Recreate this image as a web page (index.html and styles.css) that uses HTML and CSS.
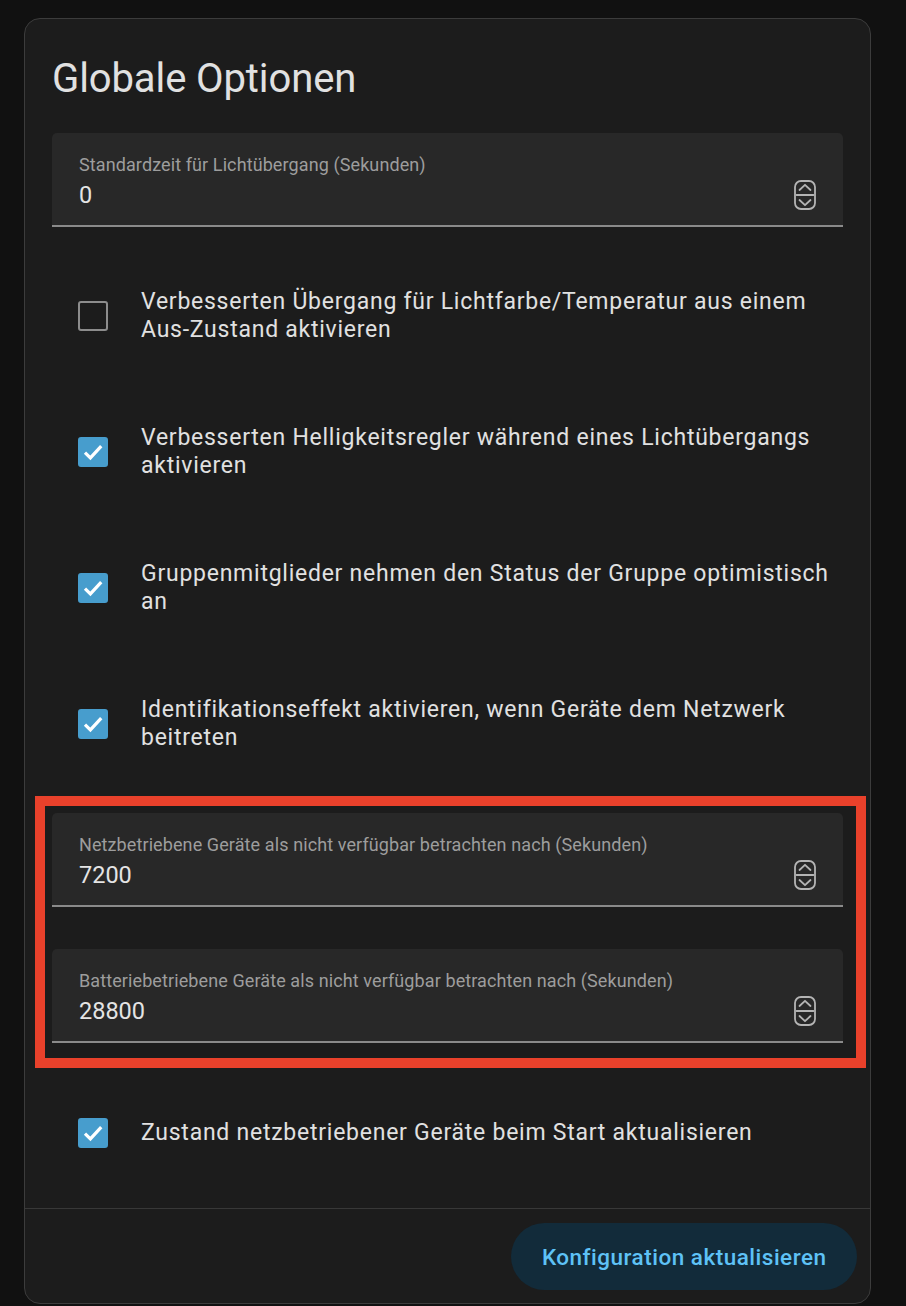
FILE: index.html
```html
<!DOCTYPE html>
<html lang="de">
<head>
<meta charset="utf-8">
<title>Globale Optionen</title>
<link rel="stylesheet" href="styles.css">
</head>
<body>
<div class="card">
  <h1 class="card-title">Globale Optionen</h1>
  <div class="card-content">
    <div class="field">
      <div class="field-label">Standardzeit für Lichtübergang (Sekunden)</div>
      <div class="field-row">
        <span class="field-value">0</span>
        <svg class="spinner" width="22" height="30" viewBox="0 0 22 30"><rect x="1" y="1" width="20" height="28" rx="6"/><path d="M5.5 10 L11 4.8 L16.5 10"/><path d="M2.5 15 H19.5"/><path d="M5.5 20 L11 25.2 L16.5 20"/></svg>
      </div>
    </div>

    <div class="row first">
      <span class="box"></span>
      <span class="row-text">Verbesserten Übergang für Lichtfarbe/Temperatur aus einem Aus-Zustand aktivieren</span>
    </div>
    <div class="row">
      <span class="box checked"><svg viewBox="0 0 24 24"><path d="M4.6 12.6 L9.6 17.4 L19.6 6.6"/></svg></span>
      <span class="row-text">Verbesserten Helligkeitsregler während eines Lichtübergangs aktivieren</span>
    </div>
    <div class="row">
      <span class="box checked"><svg viewBox="0 0 24 24"><path d="M4.6 12.6 L9.6 17.4 L19.6 6.6"/></svg></span>
      <span class="row-text">Gruppenmitglieder nehmen den Status der Gruppe optimistisch an</span>
    </div>
    <div class="row">
      <span class="box checked"><svg viewBox="0 0 24 24"><path d="M4.6 12.6 L9.6 17.4 L19.6 6.6"/></svg></span>
      <span class="row-text">Identifikationseffekt aktivieren, wenn Geräte dem Netzwerk beitreten</span>
    </div>

    <div class="highlight">
      <div class="field">
        <div class="field-label">Netzbetriebene Geräte als nicht verfügbar betrachten nach (Sekunden)</div>
        <div class="field-row">
          <span class="field-value">7200</span>
          <svg class="spinner" width="22" height="30" viewBox="0 0 22 30"><rect x="1" y="1" width="20" height="28" rx="6"/><path d="M5.5 10 L11 4.8 L16.5 10"/><path d="M2.5 15 H19.5"/><path d="M5.5 20 L11 25.2 L16.5 20"/></svg>
        </div>
      </div>
      <div class="field second">
        <div class="field-label">Batteriebetriebene Geräte als nicht verfügbar betrachten nach (Sekunden)</div>
        <div class="field-row">
          <span class="field-value">28800</span>
          <svg class="spinner" width="22" height="30" viewBox="0 0 22 30"><rect x="1" y="1" width="20" height="28" rx="6"/><path d="M5.5 10 L11 4.8 L16.5 10"/><path d="M2.5 15 H19.5"/><path d="M5.5 20 L11 25.2 L16.5 20"/></svg>
        </div>
      </div>
    </div>

    <div class="row last">
      <span class="box checked"><svg viewBox="0 0 24 24"><path d="M4.6 12.6 L9.6 17.4 L19.6 6.6"/></svg></span>
      <span class="row-text">Zustand netzbetriebener Geräte beim Start aktualisieren</span>
    </div>
  </div>
  <div class="card-actions">
    <button class="btn">Konfiguration aktualisieren</button>
  </div>
</div>
</body>
</html>
```

FILE: styles.css
```css
* { box-sizing: border-box; }
html, body {
  margin: 0;
  padding: 0;
  background: #111111;
  font-family: Roboto, "Liberation Sans", sans-serif;
}
body {
  padding: 18px 0 0 24px;
  height: 1306px;
  overflow: hidden;
}
.card {
  width: 847px;
  background: #1c1c1c;
  border: 1px solid #3c3c3c;
  border-radius: 16px;
}
.card-title {
  margin: 0;
  padding: 36px 27px 0;
  font-size: 40px;
  line-height: 48px;
  font-weight: 400;
  color: #e1e1e1;
  letter-spacing: -0.1px;
}
.card-content {
  padding: 30px 27px 20px;
}
.field {
  background: #282828;
  border-radius: 5px 5px 0 0;
  border-bottom: 2px solid #8a8a8a;
  padding: 20px 27px 15px 27px;
}
.field.second { margin-top: 42px; }
.field-label {
  font-size: 18px;
  line-height: 24px;
  letter-spacing: 0.1px;
  color: #9d9d9d;
  white-space: nowrap;
}
.field-row {
  margin-top: 3px;
  height: 30px;
  display: flex;
  align-items: center;
  justify-content: space-between;
}
.field-value {
  font-size: 23.5px;
  line-height: 30px;
  color: #e4e4e4;
}
.spinner {
  display: block;
  fill: none;
  stroke: #b4b4b4;
  stroke-width: 1.8;
  stroke-linecap: round;
  stroke-linejoin: round;
}
.row {
  display: flex;
  align-items: center;
  padding: 40px 0 40px 26px;
}
.row.first { margin-top: 21px; }
.row.last { margin-top: 10px; }
.box {
  flex: 0 0 30px;
  width: 30px;
  height: 30px;
  border: 2.5px solid #8c8c8c;
  border-radius: 3px;
  margin-right: 33px;
  display: flex;
}
.box.checked {
  background: #479dcd;
  border-color: #479dcd;
}
.box svg {
  width: 100%;
  height: 100%;
  fill: none;
  stroke: #ffffff;
  stroke-width: 3;
}
.row-text {
  font-size: 23px;
  line-height: 28px;
  letter-spacing: 0.75px;
  color: #e1e1e1;
}
.highlight {
  margin: 4px -23px 0 -17px;
  border: 10px solid #e9412b;
  padding: 7px 13px 15px 7px;
}
.card-actions {
  border-top: 1px solid #383838;
  padding: 14px 13px 13px;
  display: flex;
  justify-content: flex-end;
}
.btn {
  height: 67px;
  padding: 0 30.5px;
  border: none;
  border-radius: 34px;
  background: #122b3a;
  color: #5ec2f6;
  font-family: Roboto, "Liberation Sans", sans-serif;
  font-size: 22.5px;
  font-weight: 500;
  letter-spacing: 0.5px;
}
```
